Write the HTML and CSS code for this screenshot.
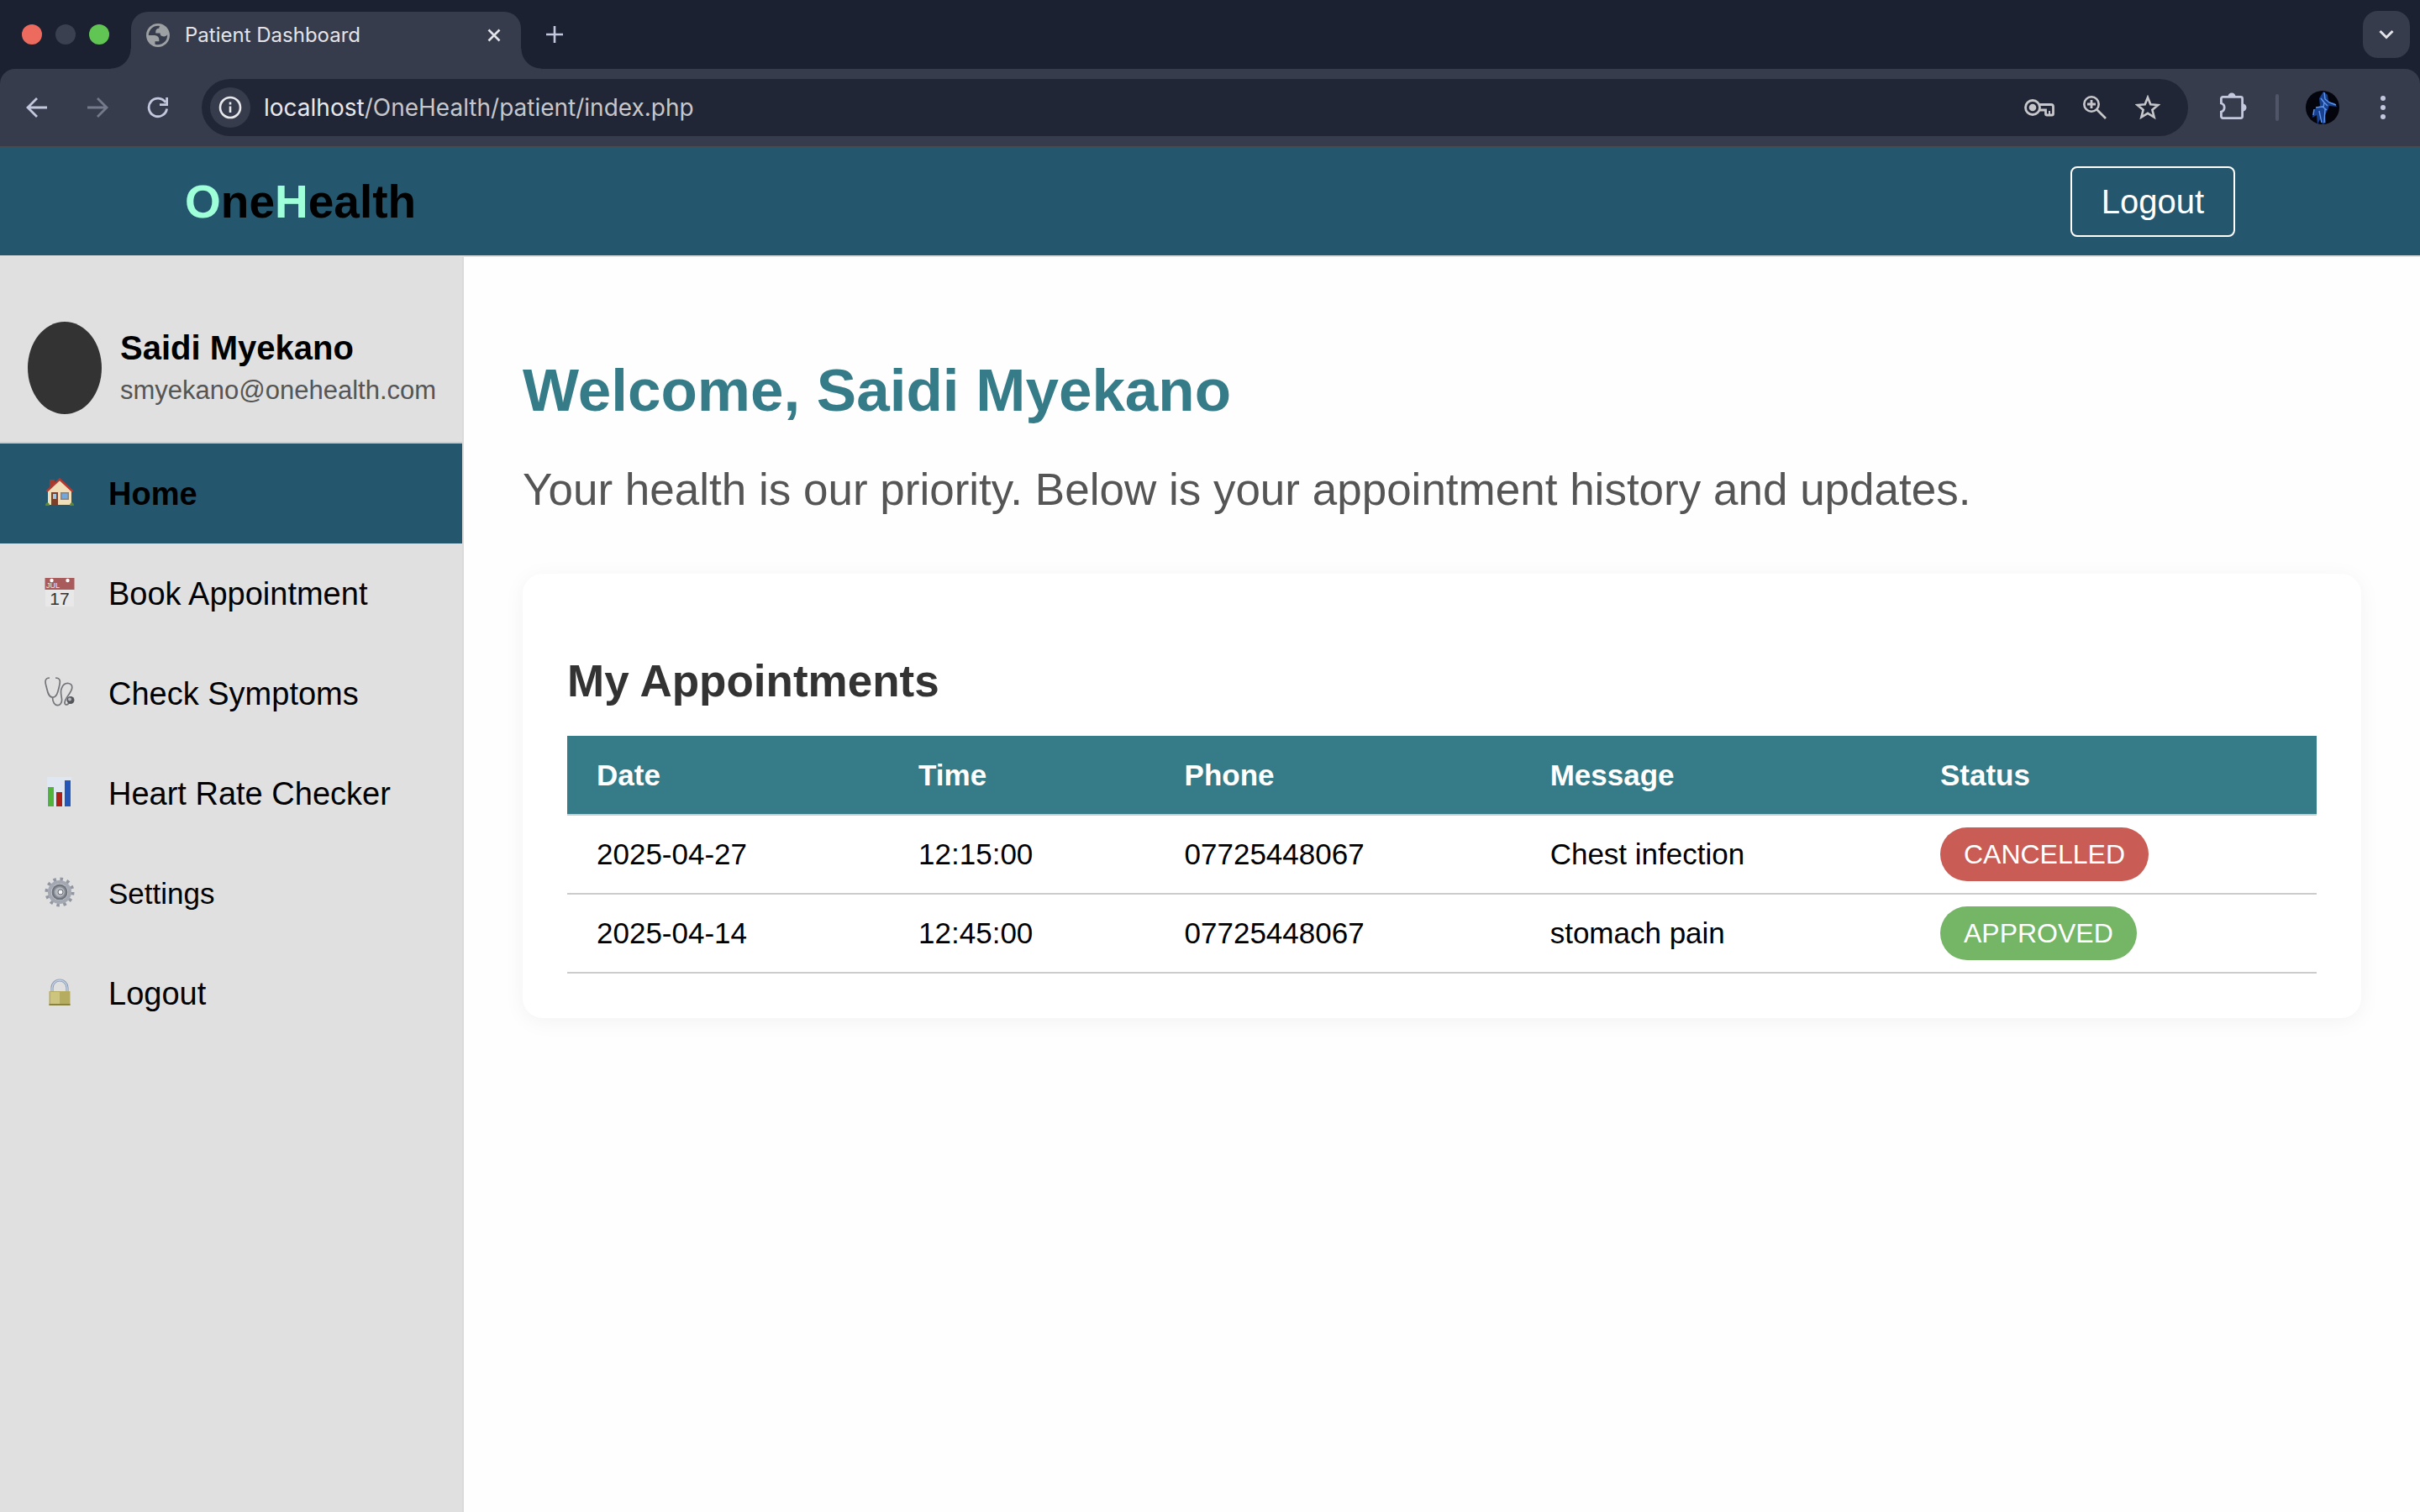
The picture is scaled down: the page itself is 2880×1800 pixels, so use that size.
FILE: index.html
```html
<!DOCTYPE html>
<html lang="en">
<head>
<meta charset="utf-8">
<title>Patient Dashboard</title>
<link rel="stylesheet" href="styles.css">
</head>
<body>
<div class="browser">
  <div class="tabstrip">
    <div class="lights"><span class="light red"></span><span class="light idle"></span><span class="light green"></span></div>
    <div class="tab">
      <svg class="globe" viewBox="2 2 20 20"><path fill="#9da1a3" fill-rule="evenodd" d="M12 2C6.480 2 2 6.480 2 12s4.480 10 10 10 10-4.480 10-10S17.520 2 12 2zM4 12h4.400c3.407.022 4.922 1.730 4.543 5.127H9.488v2.470a8.004 8.004 0 0 0 10.498-8.083C19.327 12.504 18.332 13 17 13c-2.137 0-3.206-.916-3.206-2.750h-3.748c-.274-2.728.683-4.092 2.870-4.092 0-.975.327-1.597.811-1.970A8.004 8.004 0 0 0 4 12z"/></svg>
      <span class="tab-title">Patient Dashboard</span>
      <button class="icon-btn close" aria-label="Close tab"><svg viewBox="0 0 16 16" width="16" height="16"><path d="M1.500 1.500l13 13M14.500 1.500l-13 13" stroke="#e3e3ea" stroke-width="2.600"/></svg></button>
    </div>
    <button class="icon-btn" aria-label="New tab"><svg viewBox="0 0 20 20" width="20" height="20"><path d="M10 0v20M0 10h20" stroke="#c3c8de" stroke-width="2.600"/></svg></button>
    <button class="icon-btn tab-search" aria-label="Search tabs"><svg viewBox="0 0 18 12" width="18" height="12"><path d="M1.500 2L9 9.500 16.500 2" fill="none" stroke="#e3e3ea" stroke-width="3"/></svg></button>
  </div>
  <div class="toolbar">
    <div class="nav-buttons">
      <button class="icon-btn" aria-label="Back"><svg viewBox="0 0 26 26" width="26" height="26"><path d="M25 13H3M13 2L2 13l11 11" fill="none" stroke="#c3c8de" stroke-width="2.800"/></svg></button>
      <button class="icon-btn" aria-label="Forward"><svg viewBox="0 0 26 26" width="26" height="26"><path d="M1 13h22M13 2l11 11-11 11" fill="none" stroke="#757a8b" stroke-width="2.800"/></svg></button>
      <button class="icon-btn" aria-label="Reload"><svg viewBox="0 0 26 26" width="26" height="26"><path d="M22 7A10.800 10.800 0 1 0 23.600 14.500" fill="none" stroke="#c3c8de" stroke-width="2.800"/><path d="M23.600 1v8.600H15" fill="none" stroke="#c3c8de" stroke-width="2.800"/></svg></button>
    </div>
    <div class="omnibox">
      <button class="site-info" aria-label="Site information"><svg viewBox="0 0 28 28" width="28" height="28"><circle cx="14" cy="14" r="12" fill="none" stroke="#e8e8ec" stroke-width="2.600"/><path d="M14 12.500V20M14 7.500v3" stroke="#e8e8ec" stroke-width="2.600"/></svg></button>
      <span class="url"><span class="host">localhost</span>/OneHealth/patient/index.php</span>
      <div class="omni-actions">
        <button class="icon-btn" aria-label="Passwords"><svg viewBox="0 0 36 22" width="36" height="22"><path d="M17.500 7.500H32a2.500 2.500 0 0 1 2.500 2.500v8.500a1.500 1.500 0 0 1-1.500 1.500h-6a1.500 1.500 0 0 1-1.500-1.500V14h-8" fill="none" stroke="#c7c7cb" stroke-width="2.800"/><path d="M30 15v5" stroke="#c7c7cb" stroke-width="2"/><circle cx="10" cy="11" r="8.500" fill="none" stroke="#c7c7cb" stroke-width="2.800"/><circle cx="10" cy="11" r="4.300" fill="#c7c7cb"/></svg></button>
        <button class="icon-btn" aria-label="Zoom"><svg viewBox="0 0 28 28" width="28" height="28"><circle cx="10" cy="10" r="8.700" fill="none" stroke="#c7c7cb" stroke-width="2.600"/><path d="M16.500 16.500L27 27M10 5v10M5 10h10" stroke="#c7c7cb" stroke-width="2.800"/></svg></button>
        <button class="icon-btn" aria-label="Bookmark"><svg viewBox="0 0 30 30" width="30" height="30"><path d="M15 3l3.300 8.300 9 .7-6.900 5.800 2.200 8.700-7.600-4.700-7.600 4.700 2.200-8.700L2.700 12l9-.7z" fill="none" stroke="#c7c7cb" stroke-width="2.600"/></svg></button>
      </div>
    </div>
    <button class="icon-btn" aria-label="Extensions"><svg viewBox="0 0 32 36" width="32" height="36"><path d="M1.400 13V7.400a2 2 0 0 1 2-2h21.200a2 2 0 0 1 2 2v21.200a2 2 0 0 1-2 2H3.400a2 2 0 0 1-2-2V23a5.200 5.200 0 0 0 0-10z" fill="none" stroke="#c3c8de" stroke-width="2.800"/><path d="M9.500 5a4.500 4.500 0 0 1 9 0zM27 13.500a4.500 4.500 0 0 1 0 9z" fill="#c3c8de"/></svg></button>
    <span class="divider"></span>
    <button class="icon-btn profile" aria-label="Profile"><svg viewBox="0 0 40 40" width="40" height="40"><circle cx="20" cy="20" r="20" fill="#03040c"/><path d="M16 9l5-8 5 4 1 8 8 2 2 4-9-1-2 5-3 6 1 9-4 2-2-8-4 8-1-11-5 3 1-9 8-5z" fill="#17408f"/><path d="M22 2l1 8 5 4 8 3M18 9l4 5-1 6M12 20l8-1 5 4M10 22l-1 7M16 24l3 14M23 22l-1 16M20 12l6 6" stroke="#5f96ec" stroke-width="1.400" fill="none"/></svg></button>
    <button class="icon-btn" aria-label="Menu"><svg viewBox="0 0 6 28" width="6" height="28"><g fill="#c3c8de"><circle cx="3" cy="3" r="3"/><circle cx="3" cy="14" r="3"/><circle cx="3" cy="25" r="3"/></g></svg></button>
  </div>
</div>

<header class="site-header">
  <a class="logo" href="#"><span>O</span>ne<span>H</span>ealth</a>
  <button class="logout">Logout</button>
</header>

<div class="layout">
  <aside class="sidebar">
    <div class="profile-card">
      <div class="avatar"></div>
      <div>
        <div class="name">Saidi Myekano</div>
        <div class="email">smyekano@onehealth.com</div>
      </div>
    </div>
    <nav class="menu">
      <a class="active" href="#"><svg viewBox="0 0 36 36"><path d="M6 3h6v10H6z" fill="#a33a2c"/><path d="M4 16L18 3l14 13v17H4z" fill="#f0deb8"/><path d="M2.500 17L18 2.500 33.500 17" fill="none" stroke="#b23a32" stroke-width="2.400"/><path d="M8 18h8v15H8z" fill="#7c4028"/><path d="M10 20h4v6h-4z" fill="#a5c6e4"/><path d="M19 18h10v9H19z" fill="#8a8078"/><path d="M20.500 19.500h7v6h-7z" fill="#73a8dc"/><path d="M1 34c0-5 5-5 5 0zM30 34c0-5 5-5 5 0z" fill="#5c8a32"/></svg>Home</a>
      <a href="#"><svg viewBox="0 0 36 36"><path d="M1 14h34v21H1z" fill="#e8e8e8"/><path d="M.5 1h35v14H.5z" fill="#a95b5b"/><circle cx="8.500" cy="4" r="2.200" fill="#fff"/><circle cx="27.500" cy="4" r="2.200" fill="#fff"/><text x="2" y="13" class="cal-month">JUL</text><text x="18" y="33" class="cal-day">17</text></svg>Book Appointment</a>
      <a href="#"><svg viewBox="0 0 36 36"><path d="M6 1C0 1 .5 6 2 11s2 13 7.500 13S16 17 17.500 11 19 1 13 1M9.500 24c0 13 12 12 11 2-1-8-2-9 0-13 3-8 14-7 12 1-1.500 6-9 12-8.500 17 .5 3 4 3 7-3" fill="none" stroke="#73757a" stroke-width="1.700"/><circle cx="31" cy="27.500" r="4.500" fill="#55575c"/><circle cx="30" cy="26.500" r="2" fill="#b9bbc0"/></svg>Check Symptoms</a>
      <a href="#"><svg viewBox="0 0 36 36"><path d="M3 0h29v35H3z" fill="#dfe8f2"/><path d="M4 12h7v23H4z" fill="#52b23b"/><path d="M14 18h7v17h-7z" fill="#ad2018"/><path d="M24 4h7v31h-7z" fill="#2457b8"/></svg>Heart Rate Checker</a>
      <a class="compact" href="#"><svg viewBox="0 0 36 36"><circle cx="18" cy="18" r="15.500" fill="none" stroke="#9196a0" stroke-width="4" stroke-dasharray="3.500 4.615"/><circle cx="18" cy="18" r="12" fill="none" stroke="#a3a8b2" stroke-width="4"/><circle cx="18" cy="18" r="9.500" fill="#6f747c"/><circle cx="18" cy="18" r="6.500" fill="#b4b8c0" stroke="#8b9098" stroke-width="1.500"/><circle cx="19" cy="18" r="3" fill="#f3f3f5" stroke="#666b73"/></svg>Settings</a>
      <a href="#"><svg viewBox="0 0 36 36"><path d="M9 18v-5a9 9 0 0 1 18 0v5" fill="none" stroke="#8d9bb0" stroke-width="3.200"/><path d="M9 17v-4a9 9 0 0 1 18 0v4" fill="none" stroke="#c4d2e6" stroke-width="1.400"/><path d="M5.500 17h25v17h-25z" fill="#b5ac60"/><path d="M7 18h11v14H7z" fill="#cdc57f"/><path d="M5.500 32h25v2h-25z" fill="#8a8243"/></svg>Logout</a>
    </nav>
  </aside>

  <main class="content">
    <h1>Welcome, Saidi Myekano</h1>
    <p class="lead">Your health is our priority. Below is your appointment history and updates.</p>
    <section class="card">
      <h2>My Appointments</h2>
      <table>
        <thead>
          <tr><th class="c-date">Date</th><th class="c-time">Time</th><th class="c-phone">Phone</th><th class="c-message">Message</th><th>Status</th></tr>
        </thead>
        <tbody>
          <tr><td>2025-04-27</td><td>12:15:00</td><td>07725448067</td><td>Chest infection</td><td><span class="badge cancelled">CANCELLED</span></td></tr>
          <tr><td>2025-04-14</td><td>12:45:00</td><td>07725448067</td><td>stomach pain</td><td><span class="badge approved">APPROVED</span></td></tr>
        </tbody>
      </table>
    </section>
  </main>
</div>
</body>
</html>
```
FILE: styles.css
```css
* { box-sizing: border-box; }
body {
  margin: 0;
  min-height: 100vh;
  display: flex;
  flex-direction: column;
  background: #fefefe;
  color: #000;
  font-family: "Liberation Sans", Arial, sans-serif;
}
button { font: inherit; color: inherit; cursor: pointer; }
a { color: inherit; text-decoration: none; }
svg { display: block; }

/* Browser window */
.browser { background: #1b2130; font-family: Inter, sans-serif; }
.tabstrip {
  display: flex;
  align-items: center;
  height: 82px;
  padding: 0 12px 0 26px;
}
.lights { display: flex; gap: 16px; width: 130px; }
.light { width: 24px; height: 24px; border-radius: 50%; }
.red { background: #ed6a5e; }
.idle { background: #3a404f; }
.green { background: #61c554; }
.tab {
  position: relative;
  align-self: flex-end;
  display: flex;
  align-items: center;
  width: 464px;
  height: 68px;
  margin-right: 30px;
  padding: 0 24px 12px 18px;
  border-radius: 20px 20px 0 0;
  background: #373c4c;
}
.tab::before, .tab::after {
  content: "";
  position: absolute;
  bottom: 0;
  width: 24px;
  height: 24px;
}
.tab::before { right: 100%; background: radial-gradient(circle at 0 0, transparent 23px, #373c4c 24px); }
.tab::after { left: 100%; background: radial-gradient(circle at 100% 0, transparent 23px, #373c4c 24px); }
.globe { width: 28px; height: 28px; margin-right: 18px; }
.tab-title { font-size: 24px; line-height: 32px; color: #e3e3ea; }
.icon-btn { display: flex; align-items: center; justify-content: center; flex: none; padding: 0; border: 0; background: none; }
.close { margin-left: auto; }
.tab-search { width: 56px; height: 56px; margin-left: auto; border-radius: 18px; background: #373c4c; }
.toolbar {
  display: flex;
  align-items: center;
  height: 94px;
  padding: 0 41px 0 31px;
  border-bottom: 2px solid #4a4a4e;
  border-radius: 18px 18px 0 0;
  background: #373c4c;
}
.nav-buttons { display: flex; gap: 46px; width: 209px; }
.omnibox {
  flex: 1;
  display: flex;
  align-items: center;
  height: 68px;
  margin-right: 38px;
  padding: 0 33px 0 10px;
  border-radius: 34px;
  background: #202635;
}
.site-info {
  display: flex;
  align-items: center;
  justify-content: center;
  width: 48px;
  height: 48px;
  margin-right: 16px;
  padding: 0;
  border: 0;
  border-radius: 50%;
  background: #373c4c;
}
.url { font-size: 28px; line-height: 36px; color: #c7c7cb; }
.host { color: #e8e8ec; }
.omni-actions { display: flex; align-items: center; gap: 34px; margin-left: auto; }
.divider { width: 4px; height: 32px; margin: 0 32px 0 34px; border-radius: 2px; background: #505567; }
.profile { margin-right: 49px; }

/* Site header */
.site-header {
  display: flex;
  align-items: center;
  justify-content: space-between;
  height: 130px;
  padding: 0 220px;
  border-bottom: 2px solid #e0e0e0;
  background: #24566e;
}
.logo { font-size: 55px; font-weight: bold; line-height: 64px; }
.logo span { color: #9fffd9; }
.logout {
  height: 84px;
  padding: 0 35px;
  border: 2px solid #fff;
  border-radius: 8px;
  background: none;
  color: #fff;
  font-size: 40px;
}

/* Sidebar */
.layout { flex: 1; display: flex; }
.sidebar { flex: none; width: 552px; border-right: 2px solid #dadada; background: #e0e0e0; }
.profile-card {
  display: flex;
  align-items: center;
  gap: 22px;
  padding: 77px 33px 33px;
  border-bottom: 2px solid #ccc;
}
.avatar { flex: none; width: 88px; height: 110px; border-radius: 50%; background: #333; }
.name { font-size: 40px; font-weight: bold; line-height: 54px; }
.email { font-size: 31px; line-height: 48px; color: #555; }
.menu a {
  display: flex;
  align-items: center;
  gap: 40px;
  height: 119px;
  padding: 0 53px;
  font-size: 38px;
  line-height: 44px;
}
.menu .active { background: #24566e; font-weight: bold; }
.menu .compact { font-size: 35px; }
.menu svg { width: 36px; height: 36px; margin-bottom: 4px; }
.cal-month { font-size: 9px; fill: #eee; }
.cal-day { font-size: 21px; text-anchor: middle; fill: #333; }

/* Main content */
.content { flex: 1; padding: 118px 70px 70px; }
h1 { margin: 0 0 46px; font-size: 71px; line-height: 82px; color: #367c88; }
.lead { margin: 0; font-size: 53px; line-height: 62px; color: #555; }
.card {
  margin-top: 69px;
  padding: 53px;
  border-radius: 24px;
  background: #fff;
  box-shadow: 0 4px 26px rgba(0, 0, 0, .05);
}
h2 { margin: 44px 0 35px; font-size: 53px; line-height: 61px; color: #333; }
table { width: 100%; border-collapse: collapse; table-layout: fixed; font-size: 35px; line-height: 40px; }
th, td { height: 94px; padding: 0 35px; border-bottom: 2px solid #ccc; text-align: left; }
th { background: #367c88; color: #fff; }
.c-date { width: 18.4%; }
.c-time { width: 15.2%; }
.c-phone { width: 20.9%; }
.c-message { width: 22.3%; }
.badge {
  display: inline-block;
  padding: 14px 28px;
  border-radius: 32px;
  color: #fff;
  font-size: 32px;
  line-height: 36px;
}
.cancelled { background: #c95c54; }
.approved { background: #74b566; }
```
